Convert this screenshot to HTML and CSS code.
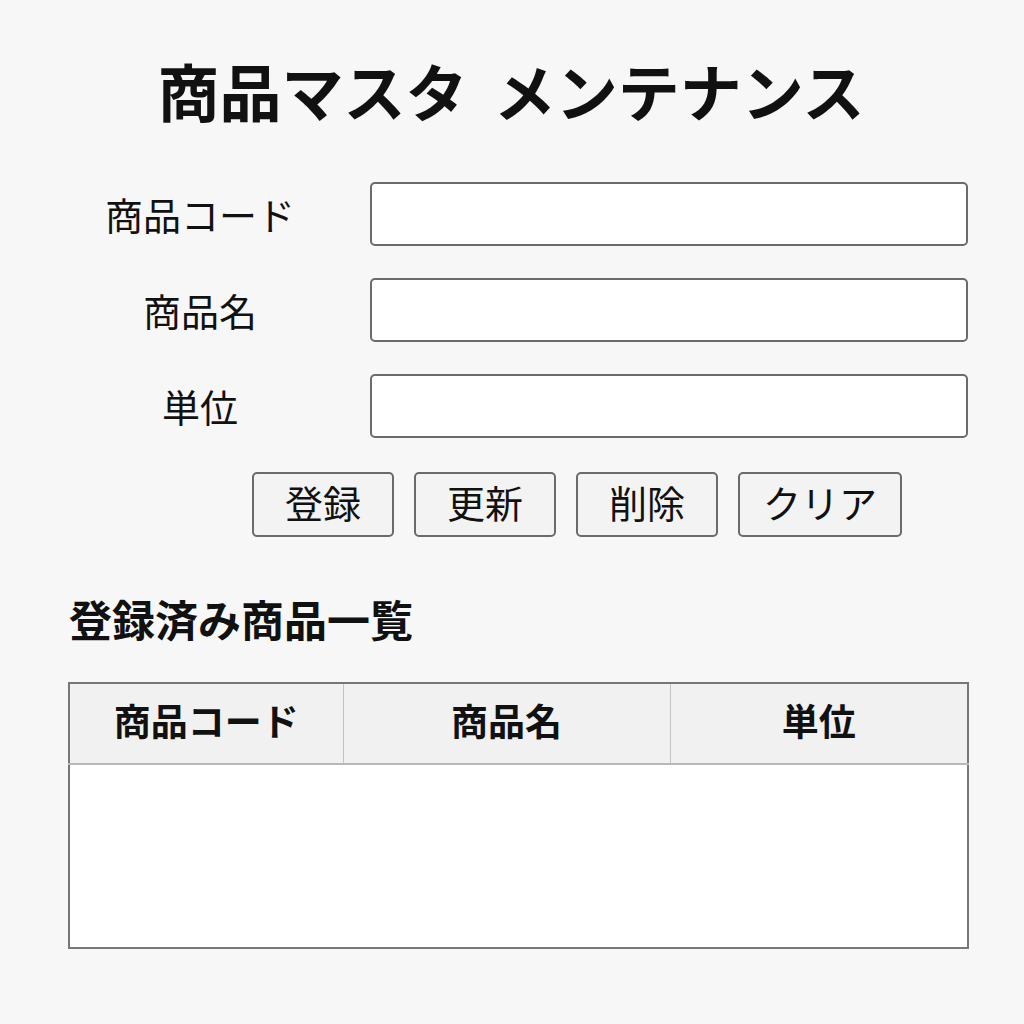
FILE: index.html
```html
<!DOCTYPE html>
<html lang="ja">
<head>
<meta charset="utf-8">
<title>商品マスタ メンテナンス</title>
<link rel="stylesheet" href="styles.css">
</head>
<body>
<main class="page">
  <h1 class="title">商品マスタ メンテナンス</h1>
  <form class="form">
    <label class="label" for="code">商品コード</label>
    <input class="input" id="code" type="text">
    <label class="label" for="name">商品名</label>
    <input class="input" id="name" type="text">
    <label class="label" for="unit">単位</label>
    <input class="input" id="unit" type="text">
  </form>
  <div class="buttons">
    <button class="btn btn-sm" type="button">登録</button>
    <button class="btn btn-sm" type="button">更新</button>
    <button class="btn btn-sm" type="button">削除</button>
    <button class="btn btn-lg" type="button">クリア</button>
  </div>
  <h2 class="subtitle">登録済み商品一覧</h2>
  <table class="table">
    <thead>
      <tr>
        <th class="c1">商品コード</th>
        <th class="c2">商品名</th>
        <th class="c3">単位</th>
      </tr>
    </thead>
    <tbody>
      <tr class="empty"><td></td><td></td><td></td></tr>
    </tbody>
  </table>
</main>
</body>
</html>
```
FILE: styles.css
```css
* { box-sizing: border-box; }
html, body { margin: 0; padding: 0; }
body {
  background: #f7f7f7;
  color: #111;
  font-family: "Noto Sans CJK JP", "Noto Sans", sans-serif;
  width: 1024px;
  height: 1024px;
  overflow: hidden;
}
.page {
  width: 900px;
  margin-left: 68px;
  padding-top: 53px;
}
.title {
  margin: 0;
  text-align: center;
  font-size: 62px;
  font-weight: 700;
  line-height: 74px;
  height: 74px;
  word-spacing: 12px;
  margin-left: -14px;
}
.form {
  margin-top: 55px;
  display: grid;
  grid-template-columns: 264px 598px;
  column-gap: 38px;
  row-gap: 32px;
  align-items: center;
}
.label {
  text-align: center;
  font-size: 38px;
  line-height: 64px;
  height: 64px;
  padding-bottom: 4px;
  font-weight: 400;
}
.input {
  height: 64px;
  width: 598px;
  background: #fff;
  border: 2px solid #6b6b6b;
  border-radius: 5px;
  margin: 0;
  font: inherit;
}
.buttons {
  display: flex;
  gap: 20px;
  margin-top: 34px;
  padding-left: 184px;
}
.btn {
  height: 65px;
  font-family: inherit;
  font-size: 38px;
  line-height: 1;
  color: #111;
  background: #f3f3f3;
  border: 2px solid #6b6b6b;
  border-radius: 5px;
  padding: 0 0 6px 0;
}
.btn-sm { width: 142px; }
.btn-lg { width: 164px; }
.subtitle {
  margin: 56px 0 0 1px;
  font-size: 43px;
  font-weight: 700;
  line-height: 50px;
  height: 50px;
}
.table {
  margin-top: 39px;
  width: 899px;
  border-collapse: collapse;
  border: 2px solid #777;
  background: #fff;
  table-layout: fixed;
}
.table th {
  height: 81px;
  background: #f1f1f1;
  font-size: 37px;
  font-weight: 700;
  text-align: center;
  border-bottom: 2px solid #b8b8b8;
  border-left: 1px solid #c4c4c4;
  padding: 0 0 8px 0;
}
.table th:first-child { border-left: none; }
.c1 { width: 274px; }
.c2 { width: 327px; }
.c3 { width: 298px; }
.empty td { height: 184px; padding: 0; }
```
